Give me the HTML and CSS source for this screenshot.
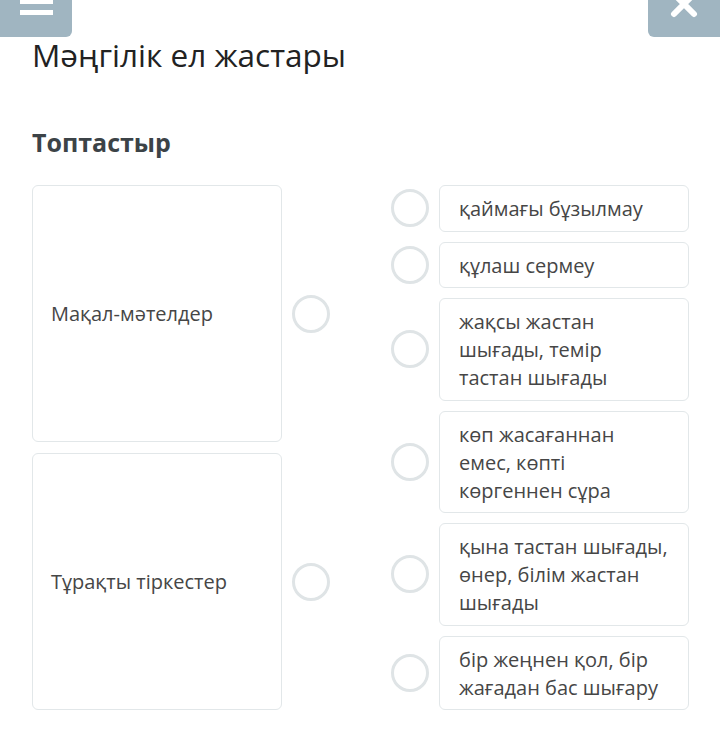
FILE: index.html
```html
<html>

<head>
    <link rel="stylesheet" href="styles.css">
</head>

<body>
<div class="topbar">
    <button class="corner-btn menu-btn" aria-label="menu">
        <span class="bar"></span>
        <span class="bar"></span>
    </button>
    <button class="corner-btn close-btn" aria-label="close">
        <svg width="28" height="28" viewBox="0 0 28 28">
            <path d="M4 4 L24 24 M24 4 L4 24" stroke="#fff" stroke-width="6" stroke-linecap="round"/>
        </svg>
    </button>
</div>

<div class="page">
    <h1 class="title">Мәңгілік ел жастары</h1>
    <h2 class="task">Топтастыр</h2>

    <div class="match">
        <div class="groups">
            <div class="group">
                <div class="card group-card">Мақал-мәтелдер</div>
                <span class="dot"></span>
            </div>
            <div class="group">
                <div class="card group-card">Тұрақты тіркестер</div>
                <span class="dot"></span>
            </div>
        </div>

        <div class="items">
            <div class="item">
                <span class="dot"></span>
                <div class="card item-card">қаймағы бұзылмау</div>
            </div>
            <div class="item">
                <span class="dot"></span>
                <div class="card item-card">құлаш сермеу</div>
            </div>
            <div class="item">
                <span class="dot"></span>
                <div class="card item-card">жақсы жастан шығады, темір тастан шығады</div>
            </div>
            <div class="item">
                <span class="dot"></span>
                <div class="card item-card">көп жасағаннан емес, көпті көргеннен сұра</div>
            </div>
            <div class="item">
                <span class="dot"></span>
                <div class="card item-card">қына тастан шығады, өнер, білім жастан шығады</div>
            </div>
            <div class="item">
                <span class="dot"></span>
                <div class="card item-card">бір жеңнен қол, бір жағадан бас шығару</div>
            </div>
        </div>
    </div>
</div>
</body>

</html>
```

FILE: styles.css
```css
body {
    margin: 0;
    background: #fff;
    font-family: "Open Sans", "Noto Sans", sans-serif;
    color: #444;
}

.topbar {
    position: relative;
    height: 0;
}

.corner-btn {
    position: absolute;
    top: 0;
    width: 72px;
    height: 37px;
    border: none;
    padding: 0;
    background: #a0b5c1;
}

.menu-btn {
    left: 0;
    border-radius: 0 0 6px 0;
}

.menu-btn .bar {
    position: absolute;
    left: 20px;
    width: 33px;
    height: 5px;
    background: #fff;
}

.menu-btn .bar:first-child {
    top: -1px;
}

.menu-btn .bar:last-child {
    top: 10px;
}

.close-btn {
    right: 0;
    border-radius: 0 0 0 6px;
}

.close-btn svg {
    position: absolute;
    left: 22px;
    top: -10px;
}

.page {
    padding: 35px 31px 0 32px;
}

.title {
    margin: 0;
    font-size: 31.5px;
    line-height: 40px;
    font-weight: 400;
    color: #222;
}

.task {
    margin: 51px 0 27px;
    font-size: 25px;
    line-height: 32px;
    font-weight: 700;
    color: #3c4347;
}

.match {
    display: flex;
    justify-content: space-between;
}

.card {
    box-sizing: border-box;
    border: 1px solid #e2e7e9;
    border-radius: 6px;
    background: #fff;
    font-size: 20px;
    line-height: 28px;
    color: #464646;
}

.dot {
    flex: none;
    box-sizing: border-box;
    width: 38px;
    height: 38px;
    border: 3px solid #dfe4e6;
    border-radius: 50%;
}

.groups {
    display: flex;
    flex-direction: column;
    gap: 11px;
}

.group {
    flex: 1;
    display: flex;
    align-items: center;
    gap: 10px;
}

.group-card {
    align-self: stretch;
    display: flex;
    align-items: center;
    width: 250px;
    padding: 0 18px;
}

.items {
    display: flex;
    flex-direction: column;
    gap: 10px;
}

.item {
    display: flex;
    align-items: center;
    gap: 10px;
}

.item-card {
    width: 250px;
    padding: 9px 18px 7.5px 19px;
}
```
